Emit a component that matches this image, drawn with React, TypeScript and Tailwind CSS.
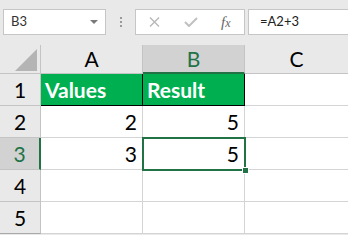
import React from "react";

const hdr = "flex items-center justify-center text-[21px] text-black border-r border-b border-[#c4c4c4] bg-[#e9e9e9]";
const cell = "flex items-center justify-end pr-[5px] text-[21px] leading-[32px] text-black bg-white border-r border-b border-[#d4d4d4]";

export default function App() {
  return (
    <div className="w-[348px] h-[235px] bg-[#e9e9e9] overflow-hidden font-['Lato',sans-serif]">
      {/* toolbar */}
      <div className="flex pt-[9px] h-[45px]">
        <div className="ml-[3px] w-[103px] h-[26px] bg-white border border-[#c6c6c6] flex items-center justify-between pl-[7px] pr-[7px]">
          <span className="text-[13px] text-[#333]">B3</span>
          <svg width="8" height="4" viewBox="0 0 8 4"><path d="M0 0H8L4 4Z" fill="#7a7a7a" /></svg>
        </div>
        <div className="w-[29px] h-[26px] flex flex-col items-center justify-center gap-[2px]">
          <div className="w-[2px] h-[2px] bg-[#9a9a9a]" />
          <div className="w-[2px] h-[2px] bg-[#9a9a9a]" />
          <div className="w-[2px] h-[2px] bg-[#9a9a9a]" />
        </div>
        <div className="w-[110px] h-[26px] bg-white border border-[#c6c6c6] flex items-center">
          <svg className="ml-[13px]" width="11" height="10" viewBox="0 0 11 10">
            <path d="M1 0.5L10 9.5M10 0.5L1 9.5" stroke="#b8b8b8" strokeWidth="1.4" />
          </svg>
          <svg className="ml-[24px]" width="14" height="10" viewBox="0 0 14 10">
            <path d="M1 5L5 9L13 1" stroke="#c0c0c0" strokeWidth="2" fill="none" />
          </svg>
          <span className="ml-[23px] text-[15px] italic text-[#666] font-['Liberation_Serif',serif] leading-none">f<span className="text-[12px]">x</span></span>
        </div>
        <div className="ml-[3px] flex-1 h-[26px] bg-white border border-[#c6c6c6] border-r-0 flex items-center pl-[11px]">
          <span className="text-[13px] text-[#222]">=A2+3</span>
        </div>
      </div>

      {/* grid */}
      <div className="relative grid grid-cols-[41px_102px_102px_1fr] grid-rows-[29px_repeat(5,32px)]">
        <div className={hdr + " relative"}>
          <svg className="absolute left-[15px] top-[4px]" width="22" height="22" viewBox="0 0 22 22">
            <path d="M22 0V22H0Z" fill="#b4b4b4" />
          </svg>
        </div>
        <div className={hdr}>A</div>
        <div className="flex items-center justify-center text-[21px] text-[#217346] bg-[#d2d2d2] border-r border-[#c4c4c4] border-b-2 border-b-[#217346]">B</div>
        <div className={hdr + " border-r-0"}>C</div>

        <div className={hdr}>1</div>
        <div className="flex items-center pl-[4px] text-[21px] font-bold text-white bg-[#00b050] border-r border-b border-black">Values</div>
        <div className="flex items-center pl-[4px] text-[21px] font-bold text-white bg-[#00b050] border-r border-b border-black">Result</div>
        <div className={cell + " border-r-0"}></div>

        <div className={hdr}>2</div>
        <div className={cell}>2</div>
        <div className={cell}>5</div>
        <div className={cell + " border-r-0"}></div>

        <div className="flex items-center justify-center text-[21px] text-[#217346] bg-[#d2d2d2] border-b border-[#c4c4c4] border-r-2 border-r-[#217346]">3</div>
        <div className={cell}>3</div>
        <div className={cell}>5</div>
        <div className={cell + " border-r-0"}></div>

        <div className={hdr}>4</div>
        <div className={cell}></div>
        <div className={cell}></div>
        <div className={cell + " border-r-0"}></div>

        <div className={hdr + " border-b-[#a8a8a8]"}>5</div>
        <div className={cell}></div>
        <div className={cell}></div>
        <div className={cell + " border-r-0"}></div>

        {/* selection */}
        <div className="absolute left-[142px] top-[92px] w-[104px] h-[34px] border-2 border-[#217346] pointer-events-none" />
        <div className="absolute left-[242px] top-[122px] w-[7px] h-[7px] bg-[#217346] border border-white" />
      </div>
    </div>
  );
}
